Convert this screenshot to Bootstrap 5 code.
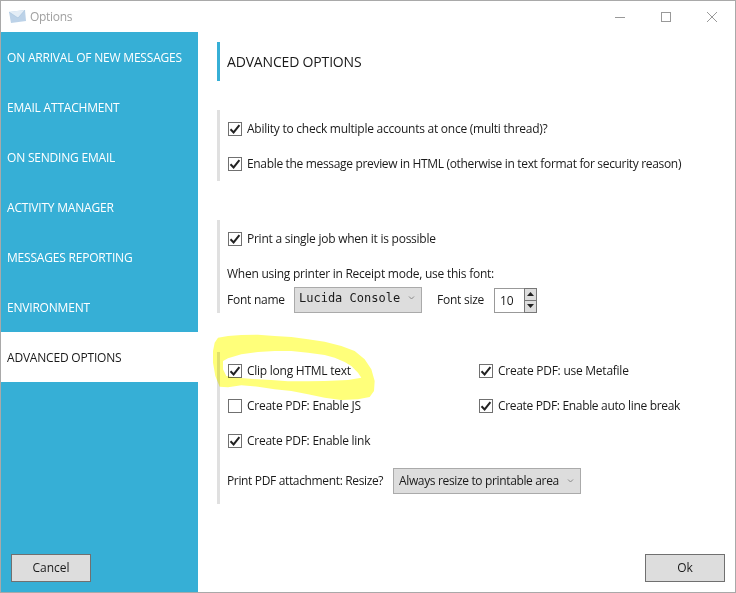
<!doctype html>
<html lang="en">
<head>
<meta charset="utf-8">
<title>Options</title>
<link href="https://cdn.jsdelivr.net/npm/bootstrap@5.3.0/dist/css/bootstrap.min.css" rel="stylesheet">
<style>
html,body{height:100%;margin:0;overflow:hidden;background:#fff}
body{font-family:"Open Sans","Noto Sans","Liberation Sans",sans-serif;font-size:12px;color:#1a1a1a;line-height:16px}
.win{position:relative;width:736px;height:593px;border:1px solid #a9a9a9;background:#fff}
.tbar{height:31px;padding-left:8px;color:#a0a0a0;letter-spacing:-.3px}
.tbar-ctrl{width:46px;height:30px}
.main{height:560px}
.side{width:197px;background:#36afd6;color:#fff;flex:none}
.side-item{height:50px;padding:2px 0 0 6px;letter-spacing:-.2px}
.side-item.on{background:#fff;color:#1a1a1a}
.side-foot{padding:0 0 10px 10px}
.win-btn{width:80px;height:28px;background:#ddd;border:1px solid #707070;border-radius:0;color:#1a1a1a;font-size:12px;padding:0}
.win-btn:hover{background:#ddd;border-color:#707070;color:#1a1a1a}
.pane{padding:10px 10px 10px 19px}
.head{height:39px;border-left:3px solid #36afd6;padding:0 0 0 7px;font-size:14px;margin-bottom:29px;letter-spacing:-.17px}
.sec{border-left:3px solid #e0e0e0;padding-left:7px}
.sec1{height:71px;margin-bottom:39px;padding-top:12px;gap:21px}
.sec2{height:93px;margin-bottom:39px;padding-top:12px}
.sec3{height:152px;padding-top:12px}
.chk{min-height:0;height:14px;padding:0;margin:0;gap:5px;letter-spacing:-.25px}
.tight{letter-spacing:-.33px}
.chk .form-check-input{float:none;margin:0 0 0 1px;width:14px;height:14px;border:1px solid #707070;border-radius:0;background-color:#fff;flex:none}
.chk .form-check-input:checked{background-color:#fff;border-color:#707070;background-image:url("data:image/svg+xml,%3Csvg xmlns='http://www.w3.org/2000/svg' viewBox='0 0 14 14'%3E%3Cpath d='M2.5 7.2 5.6 10.4 11.4 3.2' fill='none' stroke='%23222' stroke-width='2'/%3E%3C/svg%3E");background-size:14px 14px}
.cbo{height:26px;background:#ddd;border:1px solid #aaa;padding:0 0 0 4px;color:#1a1a1a}
.cbo-font{width:128px;font-family:"DejaVu Sans Mono","Liberation Mono",monospace;font-size:12px;padding-bottom:4px}
.cbo-pdf{width:188px;letter-spacing:-.35px;padding-left:5px}
.chev{flex:none;margin-right:6px;margin-left:auto}
.lab{letter-spacing:-.25px}
.lab-name{width:67px}
.lab-size{width:57px;margin-left:15px}
.lab-pdf{width:166px;letter-spacing:-.35px}
.row-gap{margin-top:5px}
.row-gap2{margin-top:20px}
.spin{height:26px}
.spin-val{width:30px;height:25px;border:1px solid #999;border-right:0;padding-left:5px;background:#fff}
.spin-btns{width:13px;height:25px;border:1px solid #777;background:#ddd}
.spin-btn{height:12px;border-bottom:1px solid #777}
.spin-btn:last-child{border-bottom:0}
.two{display:grid;grid-template-columns:251px 1fr;row-gap:21px}
.hl{position:absolute;left:207px;top:325px;mix-blend-mode:multiply;pointer-events:none}
</style>
</head>
<body>
<div class="win d-flex flex-column">
  <div class="tbar d-flex align-items-center">
    <svg width="17" height="13" viewBox="0 0 17 13" class="me-1 flex-shrink-0"><path d="M0 2 16 0 17 11 2 13Z" fill="#bcd2e8"/><path d="M0 2 9 8 16 0" fill="#e4edf6" stroke="#a9c4de" stroke-width=".7"/></svg>
    <span>Options</span>
    <div class="ms-auto d-flex">
      <div class="tbar-ctrl d-flex align-items-center justify-content-center"><svg width="10" height="10"><path d="M0 5.5H10" stroke="#999"/></svg></div>
      <div class="tbar-ctrl d-flex align-items-center justify-content-center"><svg width="10" height="10"><rect x=".5" y=".5" width="9" height="9" fill="none" stroke="#999"/></svg></div>
      <div class="tbar-ctrl d-flex align-items-center justify-content-center"><svg width="10" height="10"><path d="M0 0 10 10M10 0 0 10" stroke="#999"/></svg></div>
    </div>
  </div>
  <div class="main d-flex">
    <div class="side d-flex flex-column">
      <div class="side-item d-flex align-items-center">ON ARRIVAL OF NEW MESSAGES</div>
      <div class="side-item d-flex align-items-center">EMAIL ATTACHMENT</div>
      <div class="side-item d-flex align-items-center">ON SENDING EMAIL</div>
      <div class="side-item d-flex align-items-center">ACTIVITY MANAGER</div>
      <div class="side-item d-flex align-items-center">MESSAGES REPORTING</div>
      <div class="side-item d-flex align-items-center">ENVIRONMENT</div>
      <div class="side-item on d-flex align-items-center">ADVANCED OPTIONS</div>
      <div class="mt-auto side-foot"><button class="btn win-btn" type="button">Cancel</button></div>
    </div>
    <div class="pane flex-grow-1 d-flex flex-column">
      <div class="head d-flex align-items-center">ADVANCED OPTIONS</div>
      <div class="sec sec1 d-flex flex-column">
        <label class="form-check chk d-flex align-items-center"><input class="form-check-input" type="checkbox" checked>Ability to check multiple accounts at once (multi thread)?</label>
        <label class="form-check chk tight d-flex align-items-center"><input class="form-check-input" type="checkbox" checked>Enable the message preview in HTML (otherwise in text format for security reason)</label>
      </div>
      <div class="sec sec2 d-flex flex-column">
        <label class="form-check chk d-flex align-items-center mb-3"><input class="form-check-input" type="checkbox" checked>Print a single job when it is possible</label>
        <div class="lab mt-1">When using printer in Receipt mode, use this font:</div>
        <div class="d-flex align-items-center row-gap">
          <span class="lab lab-name">Font name</span>
          <div class="cbo cbo-font d-flex align-items-center">Lucida Console<svg class="chev" width="7" height="4"><path d="M1 .5 3.5 3 6 .5" fill="none" stroke="#888"/></svg></div>
          <span class="lab lab-size">Font size</span>
          <div class="spin d-flex align-items-end">
            <div class="spin-val d-flex align-items-center">10</div>
            <div class="spin-btns d-flex flex-column">
              <div class="spin-btn d-flex align-items-center justify-content-center"><svg width="7" height="4"><path d="M0 4 3.5 0 7 4Z" fill="#222"/></svg></div>
              <div class="spin-btn d-flex align-items-center justify-content-center"><svg width="7" height="4"><path d="M0 0 3.5 4 7 0Z" fill="#222"/></svg></div>
            </div>
          </div>
        </div>
      </div>
      <div class="sec sec3">
        <div class="two">
          <label class="form-check chk d-flex align-items-center"><input class="form-check-input" type="checkbox" checked>Clip long HTML text</label>
          <label class="form-check chk d-flex align-items-center"><input class="form-check-input" type="checkbox" checked>Create PDF: use Metafile</label>
          <label class="form-check chk d-flex align-items-center"><input class="form-check-input" type="checkbox">Create PDF: Enable JS</label>
          <label class="form-check chk tight d-flex align-items-center"><input class="form-check-input" type="checkbox" checked>Create PDF: Enable auto line break</label>
          <label class="form-check chk d-flex align-items-center"><input class="form-check-input" type="checkbox" checked>Create PDF: Enable link</label>
        </div>
        <div class="d-flex align-items-center row-gap2">
          <span class="lab-pdf">Print PDF attachment: Resize?</span>
          <div class="cbo cbo-pdf d-flex align-items-center">Always resize to printable area<svg class="chev" width="7" height="4"><path d="M1 .5 3.5 3 6 .5" fill="none" stroke="#888"/></svg></div>
        </div>
      </div>
      <div class="mt-auto d-flex justify-content-end"><button class="btn win-btn" type="button">Ok</button></div>
    </div>
  </div>
  <svg class="hl" width="172" height="74" viewBox="0 0 516 222"><path fill-rule="evenodd" fill="#ffff7a" d="M30 35L60 30 100 27 150 26 200 30 250 33 300 40 350 47 400 60 440 75 470 100 490 130 500 165 498 195 485 213 450 220 400 222 350 215 300 205 250 195 200 190 150 182 100 178 60 184 35 182 22 150 15 110 15 75 20 50ZM45 105L60 97 100 85 150 78 200 75 250 75 300 80 350 87 380 95 410 108 430 120 450 140 460 155 420 162 350 165 300 166 240 166 190 162 150 160 90 155 55 150 45 130Z"/></svg>
</div>
</body>
</html>
